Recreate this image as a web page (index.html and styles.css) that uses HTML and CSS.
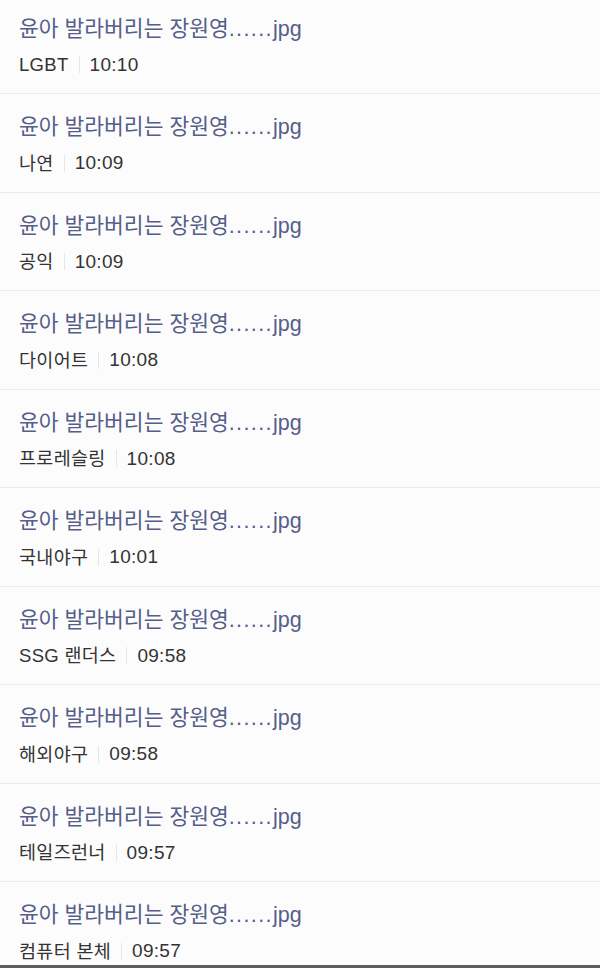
FILE: index.html
```html
<!DOCTYPE html>
<html lang="ko">
<head>
    <meta charset="UTF-8">
    <meta name="viewport" content="width=device-width, initial-scale=1.0">
    <title>게시글 목록</title>
    <link rel="stylesheet" href="styles.css">
</head>
<body>
    <div class="screen">
        <ul class="post-list">
            <li class="post">
                <div class="post-title">윤아 발라버리는 장원영<span class="dots">......</span>jpg</div>
                <div class="post-meta"><span class="board">LGBT</span><span class="time">10:10</span></div>
            </li>
            <li class="post">
                <div class="post-title">윤아 발라버리는 장원영<span class="dots">......</span>jpg</div>
                <div class="post-meta"><span class="board">나연</span><span class="time">10:09</span></div>
            </li>
            <li class="post">
                <div class="post-title">윤아 발라버리는 장원영<span class="dots">......</span>jpg</div>
                <div class="post-meta"><span class="board">공익</span><span class="time">10:09</span></div>
            </li>
            <li class="post">
                <div class="post-title">윤아 발라버리는 장원영<span class="dots">......</span>jpg</div>
                <div class="post-meta"><span class="board">다이어트</span><span class="time">10:08</span></div>
            </li>
            <li class="post">
                <div class="post-title">윤아 발라버리는 장원영<span class="dots">......</span>jpg</div>
                <div class="post-meta"><span class="board">프로레슬링</span><span class="time">10:08</span></div>
            </li>
            <li class="post">
                <div class="post-title">윤아 발라버리는 장원영<span class="dots">......</span>jpg</div>
                <div class="post-meta"><span class="board">국내야구</span><span class="time">10:01</span></div>
            </li>
            <li class="post">
                <div class="post-title">윤아 발라버리는 장원영<span class="dots">......</span>jpg</div>
                <div class="post-meta"><span class="board">SSG 랜더스</span><span class="time">09:58</span></div>
            </li>
            <li class="post">
                <div class="post-title">윤아 발라버리는 장원영<span class="dots">......</span>jpg</div>
                <div class="post-meta"><span class="board">해외야구</span><span class="time">09:58</span></div>
            </li>
            <li class="post">
                <div class="post-title">윤아 발라버리는 장원영<span class="dots">......</span>jpg</div>
                <div class="post-meta"><span class="board">테일즈런너</span><span class="time">09:57</span></div>
            </li>
            <li class="post">
                <div class="post-title">윤아 발라버리는 장원영<span class="dots">......</span>jpg</div>
                <div class="post-meta"><span class="board">컴퓨터 본체</span><span class="time">09:57</span></div>
            </li>
        </ul>
    </div>
    <div class="bottom-bar"></div>
</body>
</html>
```

FILE: styles.css
```css
body {
    font-family: "Liberation Sans", "Noto Sans CJK KR", sans-serif;
    margin: 0;
    background-color: #fcfcfd;
}
.screen {
    height: 965px;
    overflow: hidden;
}
.post-list {
    list-style: none;
    margin: -4.5px 0 0 0;
    padding: 0;
}
.post {
    box-sizing: border-box;
    height: 98.5px;
    padding: 19px 19px 0 19px;
    border-bottom: 1px solid #ebebee;
}
.post-title {
    font-size: 21.5px;
    line-height: 28px;
    color: #555e89;
    white-space: nowrap;
}
.post-title .dots {
    letter-spacing: 1.4px;
}
.post-meta {
    display: flex;
    align-items: center;
    margin-top: 10px;
    font-size: 18.5px;
    line-height: 24px;
    color: #333;
}
.post-meta .board {
    padding-right: 10px;
    border-right: 1px solid #e6e6e6;
    line-height: 17px;
}
.post-meta .board,
.post-meta .time {
    letter-spacing: 0.3px;
}
.post-meta .time {
    padding-left: 10px;
    font-size: 19px;
}
.bottom-bar {
    height: 3px;
    background-color: #5e5e5e;
}
```
